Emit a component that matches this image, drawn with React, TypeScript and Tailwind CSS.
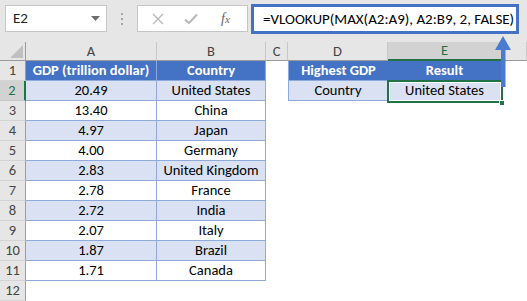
import React from "react";

const data: [string, string][] = [
  ["20.49", "United States"],
  ["13.40", "China"],
  ["4.97", "Japan"],
  ["4.00", "Germany"],
  ["2.83", "United Kingdom"],
  ["2.78", "France"],
  ["2.72", "India"],
  ["2.07", "Italy"],
  ["1.87", "Brazil"],
  ["1.71", "Canada"],
];

const colHeads = ["A", "B", "C", "D", "E", ""];

const RowHead = ({ n }: { n: number }) => {
  const sel = n === 2;
  return (
    <div
      className={
        sel
          ? "flex items-center justify-center border-b border-b-[#c8c8c8] border-r-2 border-r-[#217346] bg-[#d2d2d2] text-[#217346]"
          : "flex items-center justify-center border-b border-b-[#d4d4d4] border-r border-r-[#9b9b9b] bg-[#e6e6e6] text-[#444]"
      }
    >
      {n}
    </div>
  );
};

const TableCell = ({ text, kind, band }: { text: string; kind: "head" | "data"; band?: boolean }) => {
  if (kind === "head") {
    return (
      <div className="flex items-center justify-center border-r border-b border-[#8ea9db] bg-[#4472c4] font-bold text-white whitespace-nowrap">
        {text}
      </div>
    );
  }
  return (
    <div
      className={
        band
          ? "flex items-center justify-center border-r border-b border-[#8ea9db] bg-[#d9e1f2] text-black whitespace-nowrap"
          : "flex items-center justify-center border-r border-b border-[#8ea9db] bg-white text-black whitespace-nowrap"
      }
    >
      {text}
    </div>
  );
};

const Empty = () => <div className="bg-white" />;

export default function App() {
  return (
    <div className="relative h-[301px] w-[527px] overflow-hidden bg-white font-[Calibri,Carlito,Lato,sans-serif] text-[14.5px] leading-none">
      {/* TOOLBAR */}
      <div className="flex h-[42px] items-start bg-[#e6e6e6] pt-[5px]">
        <div className="ml-[5px] flex h-[27px] w-[102px] items-center justify-between border border-[#c6c6c6] bg-white pl-[7px] pr-[6px] text-[15px] text-[#222]">
          <span>E2</span>
          <svg width="9" height="6" viewBox="0 0 9 6">
            <path d="M0 0 H9 L4.5 5 Z" fill="#6d6d6d" />
          </svg>
        </div>
        <div className="flex h-[27px] w-[30px] flex-col items-center justify-center gap-[3px]">
          <span className="h-[2px] w-[2px] bg-[#a6a6a6]" />
          <span className="h-[2px] w-[2px] bg-[#a6a6a6]" />
          <span className="h-[2px] w-[2px] bg-[#a6a6a6]" />
        </div>
        <div className="flex h-[27px] w-[111px] items-center border border-[#c6c6c6] bg-white">
          <svg className="ml-[14px]" width="12" height="12" viewBox="0 0 12 12">
            <path d="M1 1 L11 11 M11 1 L1 11" stroke="#b8b8b8" strokeWidth="1.3" />
          </svg>
          <svg className="ml-[20px]" width="14" height="12" viewBox="0 0 14 12">
            <path d="M1 6.5 L5 10 L13 1.5" stroke="#b8b8b8" strokeWidth="2" fill="none" />
          </svg>
          <span className="ml-[23px] font-['Liberation_Serif',serif] text-[14px] italic text-[#666]">
            f<span className="text-[11px]">x</span>
          </span>
        </div>
        <div className="ml-[3px] -mt-[1px] flex h-[30px] w-[268px] items-center border-[3px] border-[#4472c4] bg-white pl-[9px] text-[15px] text-black whitespace-nowrap">
          =VLOOKUP(MAX(A2:A9), A2:B9, 2, FALSE)
        </div>
      </div>

      {/* GRID */}
      <div className="grid grid-cols-[26px_131px_109px_22px_100px_114px_1fr] grid-rows-[19px] auto-rows-[20px]">
        {/* column headers */}
        <div className="flex items-end justify-end border-r border-b border-[#9b9b9b] bg-[#e6e6e6] p-[2px]">
          <svg width="13" height="13" viewBox="0 0 13 13">
            <path d="M13 0 V13 H0 Z" fill="#c0c0c0" />
          </svg>
        </div>
        {colHeads.map((c, i) =>
          c === "E" ? (
            <div key={i} className="flex items-center justify-center border-r border-r-[#c8c8c8] border-b-2 border-b-[#217346] bg-[#d2d2d2] text-[#217346]">
              {c}
            </div>
          ) : (
            <div key={i} className="flex items-center justify-center border-r border-r-[#c8c8c8] border-b border-b-[#9b9b9b] bg-[#e6e6e6] text-[#444]">
              {c}
            </div>
          )
        )}

        {/* row 1 */}
        <RowHead n={1} />
        <TableCell kind="head" text="GDP (trillion dollar)" />
        <TableCell kind="head" text="Country" />
        <Empty />
        <div className="flex items-center justify-center border-b border-l border-[#8ea9db] bg-[#4472c4] font-bold text-white">Highest GDP</div>
        <div className="flex items-center justify-center border-r border-b border-[#8ea9db] bg-[#4472c4] font-bold text-white">Result</div>
        <Empty />

        {data.map(([gdp, country], i) => {
          const n = i + 2;
          const band = n % 2 === 0;
          return (
            <React.Fragment key={n}>
              <RowHead n={n} />
              <TableCell kind="data" band={band} text={gdp} />
              <TableCell kind="data" band={band} text={country} />
              <Empty />
              {n === 2 ? (
                <>
                  <div className="flex items-center justify-center border-b border-l border-r border-[#8ea9db] bg-[#d9e1f2] text-black">Country</div>
                  <div className="flex items-center justify-center border-b border-r border-[#8ea9db] bg-[#d9e1f2] text-black">United States</div>
                </>
              ) : (
                <>
                  <Empty />
                  <Empty />
                </>
              )}
              <Empty />
            </React.Fragment>
          );
        })}

        {/* row 12 */}
        <RowHead n={12} />
        <Empty />
        <Empty />
        <Empty />
        <Empty />
        <Empty />
        <Empty />
      </div>

      {/* SELECTION ON E2 */}
      <div className="pointer-events-none absolute left-[387px] top-[80px] h-[23px] w-[116px] border-2 border-[#217346]">
        <div className="h-full w-full border border-white" />
      </div>
      <div className="pointer-events-none absolute left-[499px] top-[100px] h-[6px] w-[6px] border border-white bg-[#217346]" />

      {/* ARROW */}
      <svg className="pointer-events-none absolute left-[492px] top-[35px]" width="20" height="52" viewBox="0 0 20 52">
        <rect x="9" y="12" width="4.5" height="40" fill="#4a7bd0" />
        <path d="M11 1 L19 15 H3 Z" fill="#4a7bd0" />
      </svg>
    </div>
  );
}
